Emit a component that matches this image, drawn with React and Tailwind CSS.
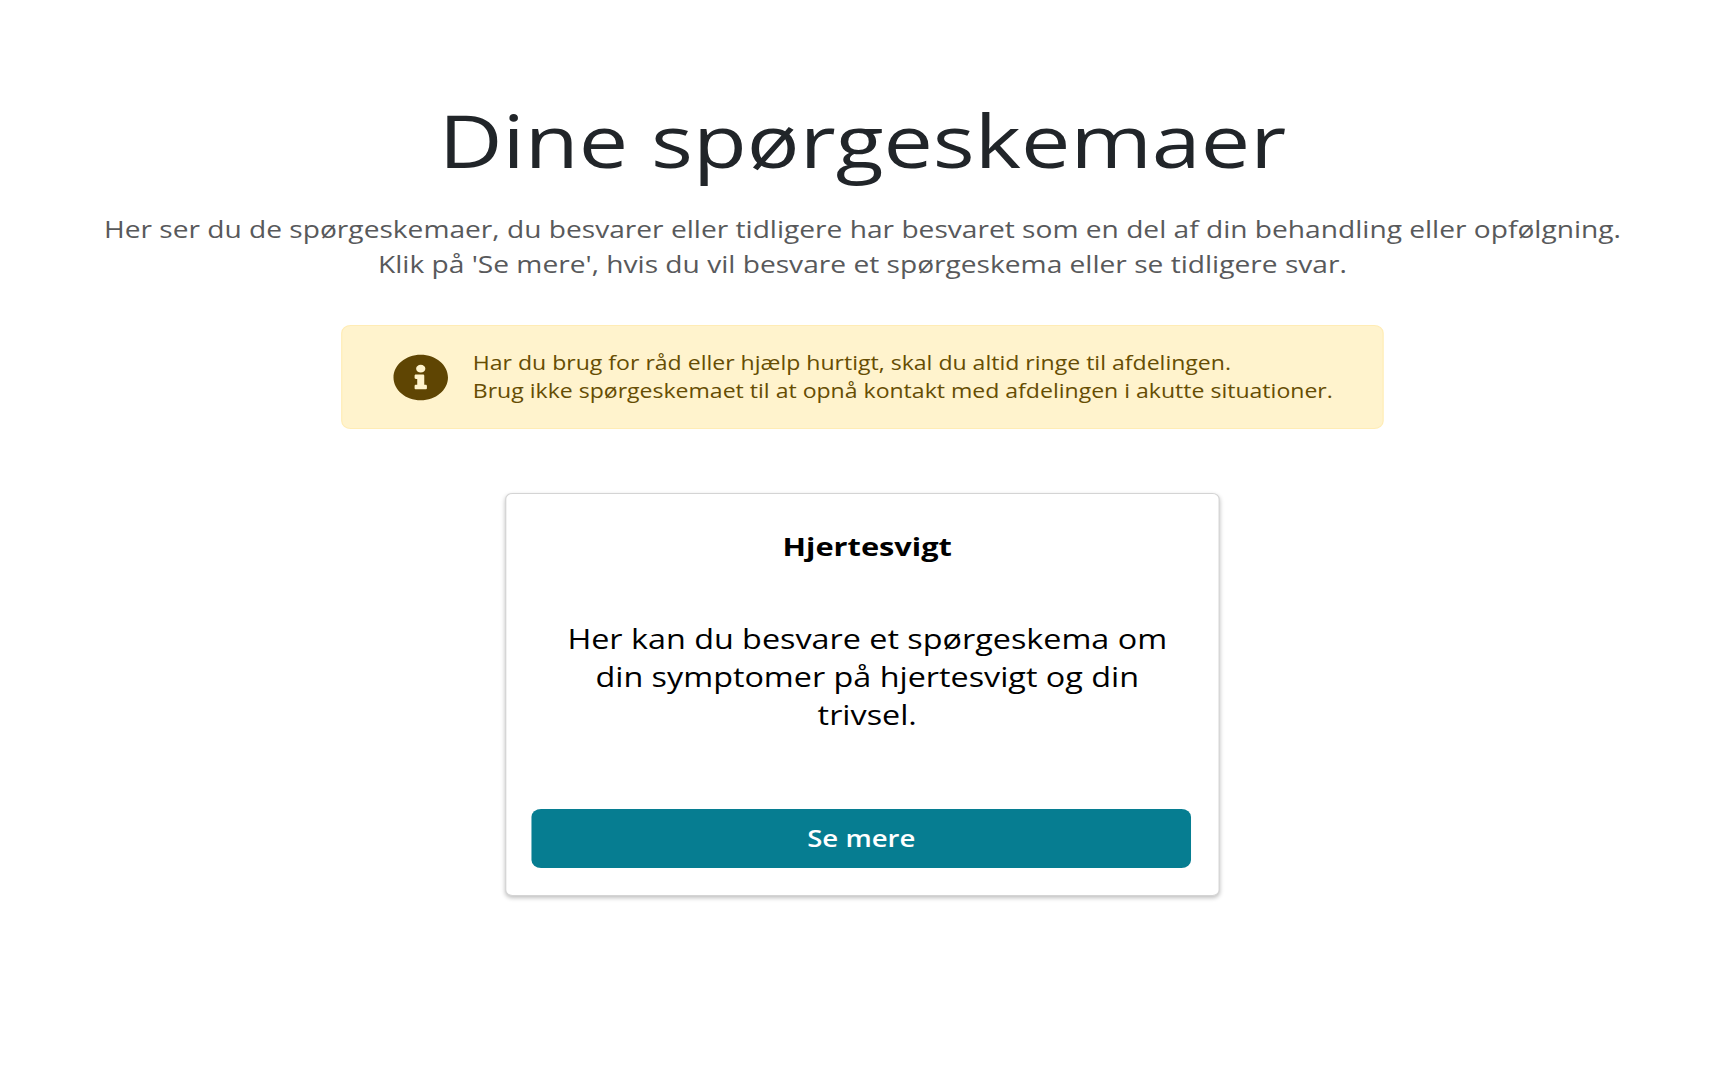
import { FaInfoCircle } from 'react-icons/fa'

export default function App() {
  return (
    <div className="h-[1083px] w-full overflow-hidden bg-white">
      {/* reference is stretched sideways, so the whole page is drawn narrow and scaled */}
      <div className="w-[1435px] origin-top-left scale-x-[1.197] pl-[6px] pt-[92px] text-center font-['Open_Sans',sans-serif]">
        <h1 className="text-[73.5px] leading-[96px] font-normal text-[#212529]">Dine spørgeskemaer</h1>

        <div className="mt-[24px] text-[23.5px] leading-[35px] text-[#58595b]">
          <p>Her ser du de spørgeskemaer, du besvarer eller tidligere har besvaret som en del af din behandling eller opfølgning.</p>
          <p>Klik på 'Se mere', hvis du vil besvare et spørgeskema eller se tidligere svar.</p>
        </div>

        {/* info */}
        <div className="mx-auto mt-[43px] flex h-[104px] w-[871px] items-center rounded-lg border border-[#ffecb5] bg-[#fff3cd] pl-[42px] text-left text-[#664d03]">
          <FaInfoCircle className="h-[47px] w-[47px] shrink-0 text-[#5f4503]" />
          <div className="ml-[20px] text-[19.25px] leading-[28px]">
            <p>Har du brug for råd eller hjælp hurtigt, skal du altid ringe til afdelingen.</p>
            <p>Brug ikke spørgeskemaet til at opnå kontakt med afdelingen i akutte situationer.</p>
          </div>
        </div>

        {/* kort */}
        <div className="mx-auto mt-[64px] flex h-[403px] w-[597px] flex-col rounded-md border border-[#d4d4d4] bg-white pl-[21px] pr-[23px] pt-[35px] shadow-[0_2px_4px_rgba(0,0,0,0.25)]">
          <h2 className="pl-[10px] text-[25.7px] leading-[36px] font-bold text-black">Hjertesvigt</h2>
          <p className="mt-[55px] pl-[30px] pr-[20px] text-[27px] leading-[38px] text-black">
            Her kan du besvare et spørgeskema om din symptomer på hjertesvigt og din trivsel.
          </p>
          <button className="mt-[75px] h-[59px] rounded-lg bg-[#067d91] text-[23px] font-semibold text-white">Se mere</button>
        </div>
      </div>
    </div>
  )
}
